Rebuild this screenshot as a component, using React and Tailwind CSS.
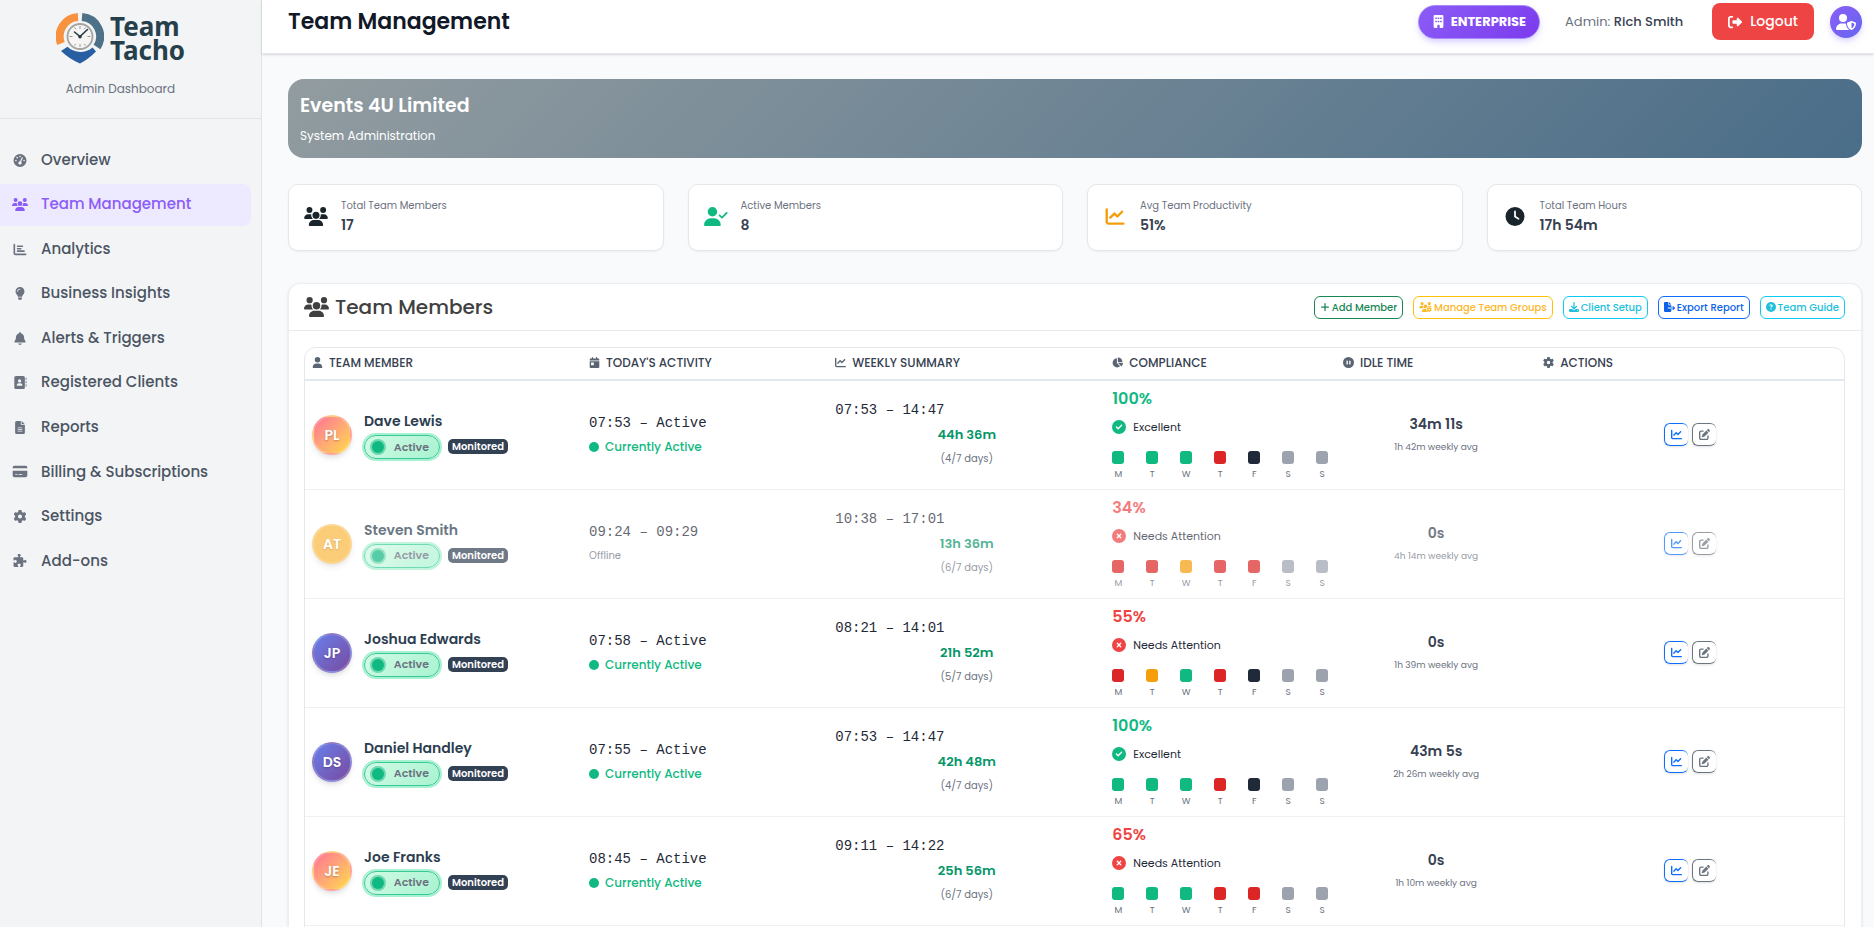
import React from "react";
import {
  FaGaugeHigh, FaUsers, FaChartBar, FaLightbulb, FaBell, FaAddressBook, FaFileLines,
  FaCreditCard, FaGear, FaPuzzlePiece, FaBuilding, FaRightFromBracket, FaUserShield,
  FaUserCheck, FaChartLine, FaClock, FaUser, FaCalendarDay, FaChartPie, FaCirclePause,
  FaPlus, FaUsersGear, FaDownload, FaFileExport, FaCircleQuestion, FaPenToSquare,
  FaCircleCheck, FaCircleXmark, FaCircle,
} from "react-icons/fa6";

const NAV = [
  ["Overview", FaGaugeHigh],
  ["Team Management", FaUsers],
  ["Analytics", FaChartBar],
  ["Business Insights", FaLightbulb],
  ["Alerts & Triggers", FaBell],
  ["Registered Clients", FaAddressBook],
  ["Reports", FaFileLines],
  ["Billing & Subscriptions", FaCreditCard],
  ["Settings", FaGear],
  ["Add-ons", FaPuzzlePiece],
];

const STATS = [
  ["Total Team Members", "17", FaUsers, "text-[#1a252b]"],
  ["Active Members", "8", FaUserCheck, "text-[#10b981]"],
  ["Avg Team Productivity", "51%", FaChartLine, "text-[#f59e0b]"],
  ["Total Team Hours", "17h 54m", FaClock, "text-[#1a252b]"],
];

const TOOLS = [
  ["Add Member", FaPlus, "w-2.5", "border-[#198754] text-[#198754]"],
  ["Manage Team Groups", FaUsersGear, "w-[13px]", "border-[#ffc107] text-[#fbb829]"],
  ["Client Setup", FaDownload, "w-2.5", "border-[#0dcaf0] text-[#20c0dd]"],
  ["Export Report", FaFileExport, "w-[11px]", "border-[#0d6efd] text-[#0d62ea]"],
  ["Team Guide", FaCircleQuestion, "w-2.5", "border-[#0dcaf0] text-[#20c0dd]"],
];

const COLUMNS = [
  ["Team Member", FaUser, "w-[18%]"],
  ["Today's Activity", FaCalendarDay, "w-[16%]"],
  ["Weekly Summary", FaChartLine, "w-[18%]"],
  ["Compliance", FaChartPie, "w-[15%]"],
  ["Idle Time", FaCirclePause, "w-[13%]"],
  ["Actions", FaGear, "w-[20%]"],
];

const DAY_COLORS = {
  g: "bg-[#10b981]",
  r: "bg-[#dc2626]",
  o: "bg-[#f59e0b]",
  k: "bg-[#1f2937]",
  x: "bg-[#9ca3af]",
};

const WARM = "bg-linear-135 from-[#ff6f91] to-[#ffd93d]";
const COOL = "bg-linear-135 from-[#667eea] to-[#764ba2]";
const AMBER = "bg-[#fbb840]";

const MEMBERS = [
  { initials: "PL", name: "Dave Lewis", avatar: WARM, start: "07:53", range: "07:53 – 14:47", total: "44h 36m", days: "(4/7 days)", score: "100%", good: true, week: "gggrkxx", idle: "34m 11s", avg: "1h 42m weekly avg" },
  { initials: "AT", name: "Steven Smith", avatar: AMBER, offline: true, start: "09:24", end: "09:29", range: "10:38 – 17:01", total: "13h 36m", days: "(6/7 days)", score: "34%", week: "rrorrxx", idle: "0s", avg: "4h 14m weekly avg" },
  { initials: "JP", name: "Joshua Edwards", avatar: COOL, start: "07:58", range: "08:21 – 14:01", total: "21h 52m", days: "(5/7 days)", score: "55%", week: "rogrkxx", idle: "0s", avg: "1h 39m weekly avg" },
  { initials: "DS", name: "Daniel Handley", avatar: COOL, start: "07:55", range: "07:53 – 14:47", total: "42h 48m", days: "(4/7 days)", score: "100%", good: true, week: "gggrkxx", idle: "43m 5s", avg: "2h 26m weekly avg" },
  { initials: "JE", name: "Joe Franks", avatar: WARM, start: "08:45", range: "09:11 – 14:22", total: "25h 56m", days: "(6/7 days)", score: "65%", week: "gggrrxx", idle: "0s", avg: "1h 10m weekly avg" },
];

function Logo() {
  return (
    <div className="flex items-center gap-1.5">
      <svg viewBox="0 0 48 52" className="h-[52px] w-12" aria-hidden="true">
        <path d="M22 5A19.500 19.500 0 0 0 5 31.500" fill="none" stroke="#f9923e" strokeWidth="8" />
        <path d="M26 5A19.500 19.500 0 0 1 41 35" fill="none" stroke="#4d7188" strokeWidth="8" />
        <path d="M5 39 11.500 34.800C18 41.500 30 41.500 36.500 35.500L40 39.500Q32 47.500 24 51.500 14 47.500 5 39Z" fill="#285fa3" />
        <circle cx="24" cy="24.500" r="12.500" fill="#f6f5f3" stroke="#a3a3a3" strokeWidth="1.800" />
        <path d="M24 14v3M24 32v3M13.500 24.500h3M31.500 24.500h3M18.700 15.500l1 1.700M29.300 15.500l-1 1.700M18.700 33.500l1-1.700M29.300 33.500l-1-1.700" stroke="#999" strokeWidth="1" />
        <path d="M18.500 20 24 24.500 31.500 17.500" fill="none" stroke="#263b45" strokeWidth="1.600" strokeLinecap="round" />
        <circle cx="24" cy="24.700" r="1.800" fill="#263b45" />
      </svg>
      <div className="font-['Noto_Sans',sans-serif] text-[26px] leading-6 font-bold text-[#25404a]">
        Team<br />Tacho
      </div>
    </div>
  );
}

function Sidebar() {
  return (
    <aside className="w-[262px] shrink-0 border-r border-[#dfe2e6] bg-[#f3f4f6]">
      <div className="flex flex-col items-center border-b border-[#e1e4e8] pt-3 pr-5 pb-[19px]">
        <Logo />
        <p className="mt-[15px] text-[12px] leading-5 text-[#6b7280]">Admin Dashboard</p>
      </div>
      <nav className="flex h-[463px] flex-col justify-between pt-5 pr-2.5">
        {NAV.map(([label, Icon]) => {
          const active = label === "Team Management";
          return (
            <a
              key={label}
              href="#"
              className={`flex h-[42px] items-center gap-[13px] rounded-r-lg pl-3 text-[15px] font-medium ${active ? "bg-[#ede9fe] text-[#8b5cf6]" : "text-[#4b5563]"}`}
            >
              <Icon className={`h-[13px] w-4 shrink-0 ${active ? "" : "text-[#6b7280]"}`} />
              {label}
            </a>
          );
        })}
      </nav>
    </aside>
  );
}

function TopBar() {
  return (
    <header className="flex h-[54px] items-start justify-between border-b border-[#e5e7eb] bg-white pr-3 pl-[26px] shadow-sm">
      <h1 className="mt-1.5 text-[22px] leading-8 font-semibold text-[#111827]">Team Management</h1>
      <div className="flex h-[43px] items-center">
        <span className="flex h-[34px] items-center gap-1.5 rounded-full border border-[#a78bfa] bg-linear-135 from-[#8b5cf6] to-[#7c3aed] px-[13px] text-[13px] font-bold text-white shadow-md shadow-violet-200">
          <FaBuilding className="size-[13px]" /> ENTERPRISE
        </span>
        <span className="ml-[25px] text-[13px] text-[#6b7280]">
          Admin: <b className="font-medium text-[#374151]">Rich Smith</b>
        </span>
        <button className="ml-[29px] flex h-[37px] items-center gap-2 rounded-lg bg-[#ef4444] px-4 text-[14px] font-medium text-white">
          <FaRightFromBracket className="size-[14px]" /> Logout
        </button>
        <button aria-label="Account" className="ml-4 flex size-8 items-center justify-center rounded-full bg-linear-135 from-[#8b5cf6] to-[#6366f1] text-white shadow-md shadow-violet-200">
          <FaUserShield className="h-4 w-5" />
        </button>
      </div>
    </header>
  );
}

function MemberRow({ m }) {
  return (
    <tr className={`h-[109px] border-b border-[#f0f1f3] ${m.offline ? "[&>td>*]:opacity-70" : ""}`}>
      <td className="pl-[7px]">
        <div className="flex items-center gap-3">
          <span className={`flex size-10 shrink-0 items-center justify-center rounded-full border-2 border-white/20 text-sm font-semibold text-white shadow-md [text-shadow:0_1px_2px_rgba(0,0,0,0.25)] ${m.avatar}`}>
            {m.initials}
          </span>
          <div>
            <div className="text-[14px] leading-5 font-semibold text-[#2c3e50]">{m.name}</div>
            <div className="mt-1 flex items-center gap-2">
              <span className="flex h-6 w-[76px] items-center justify-between rounded-full border border-[#34c996] bg-linear-135 from-[#d1fae5] to-[#a7f3d0] pr-2.5 pl-[7px] text-[11px] font-semibold text-[#6b7280] ring-2 ring-[#a7f0d0]">
                <span className="size-3 rounded-full bg-[#10b981] ring-2 ring-[#6fd8b0]" />
                Active
              </span>
              <span className="rounded-[5px] bg-[#334155] px-1 text-[10px] leading-[15px] font-semibold text-white">Monitored</span>
            </div>
          </div>
        </div>
      </td>
      <td className="pl-[7px]">
        <div>
          <div className="font-['Liberation_Mono',monospace] text-[14px] leading-5 text-[#1f2937]">
            {m.start} – {m.end || "Active"}
          </div>
          {m.offline ? (
            <div className="mt-1 text-[10px] leading-5 text-[#6b7280]">Offline</div>
          ) : (
            <div className="mt-1 flex items-center gap-1.5 text-[12px] leading-5 font-medium text-[#10b981]">
              <FaCircle className="text-[10px]" /> Currently Active
            </div>
          )}
        </div>
      </td>
      <td className="pl-[7px]">
        <div className="pr-[7px]">
          <div className="font-['Liberation_Mono',monospace] text-[14px] leading-5 text-[#1f2937]">{m.range}</div>
          <div className="mt-[5px] text-center text-[13px] leading-5 font-semibold text-[#059669]">{m.total}</div>
          <div className="mt-1 text-center text-[10px] leading-5 text-[#6b7280]">{m.days}</div>
        </div>
      </td>
      <td className="pl-[7px]">
        <div>
          <div className={`text-[16px] leading-5 font-semibold ${m.good ? "text-[#10b981]" : "text-[#ef4444]"}`}>{m.score}</div>
          <div className="mt-2 flex items-center gap-[7px] text-[11px] leading-5 text-[#1f2937]">
            {m.good ? <FaCircleCheck className="text-sm text-[#10b981]" /> : <FaCircleXmark className="text-sm text-[#ef4444]" />}
            {m.good ? "Excellent" : "Needs Attention"}
          </div>
          <div className="mt-[14px] flex gap-[22px]">
            {"MTWTFSS".split("").map((d, i) => (
              <div key={i} className="flex w-3 flex-col items-center">
                <span className={`h-[13px] w-3 rounded-[3px] ${DAY_COLORS[m.week[i]]}`} />
                <span className="mt-1 text-[9px] leading-3 text-[#6b7280]">{d}</span>
              </div>
            ))}
          </div>
        </div>
      </td>
      <td className="text-center">
        <div className="pb-px">
          <div className="text-[14px] leading-5 font-semibold text-[#374151]">{m.idle}</div>
          <div className="mt-[5px] text-[9px] leading-4 text-[#6b7280]">{m.avg}</div>
        </div>
      </td>
      <td>
        <div className="flex justify-center gap-1">
          <button aria-label={`Statistics for ${m.name}`} className="flex h-[23px] w-6 items-center justify-center rounded-md border border-r-0 border-[#0d6efd] text-[#0d6efd] shadow-sm">
            <FaChartLine className="size-[11px]" />
          </button>
          <button aria-label={`Edit ${m.name}`} className="flex h-[23px] w-6 items-center justify-center rounded-md border border-r-0 border-[#6c757d] text-[#6c757d] shadow-sm">
            <FaPenToSquare className="size-[11px]" />
          </button>
        </div>
      </td>
    </tr>
  );
}

export default function App() {
  return (
    <div className="flex h-screen overflow-hidden bg-[#f8fafc] font-['Poppins','Inter',sans-serif]">
      <Sidebar />
      <div className="flex min-w-0 flex-1 flex-col">
        <TopBar />
        <main className="flex-1 overflow-hidden pt-[25px] pr-3 pl-[26px]">
          <section className="rounded-2xl bg-linear-135 from-[#929ca0] to-[#4a6d88] px-3 pt-[13px] pb-3 text-white">
            <h2 className="text-[19px] leading-7 font-semibold">Events 4U Limited</h2>
            <p className="mt-1.5 text-[12px] leading-5">System Administration</p>
          </section>

          <section className="mt-[26px] grid grid-cols-4 gap-6">
            {STATS.map(([label, value, Icon, color]) => (
              <div key={label} className="flex h-[67px] items-center gap-[13px] rounded-[10px] border border-[#e5e7eb] bg-white pb-0.5 pl-[15px] shadow-xs">
                <Icon className={`h-[19px] w-6 shrink-0 ${color}`} />
                <div>
                  <div className="text-[10px] leading-4 text-[#6b7280]">{label}</div>
                  <div className="mt-px text-[14px] leading-5 font-semibold text-[#374151]">{value}</div>
                </div>
              </div>
            ))}
          </section>

          <section className="mt-8 rounded-xl border border-[#eceef1] bg-white shadow-sm">
            <div className="flex h-[47px] items-center justify-between border-b border-[#e9ebee] pr-4 pl-[15px]">
              <h2 className="flex items-center gap-1.5 text-[20px] font-medium text-[#404040]">
                <FaUsers className="h-5 w-[25px]" /> Team Members
              </h2>
              <div className="flex gap-2.5">
                {TOOLS.map(([label, Icon, size, style]) => (
                  <button key={label} className={`flex h-[23px] items-center gap-0.5 rounded-md border px-[5px] text-[10px] font-medium ${style}`}>
                    <Icon className={`h-2.5 ${size}`} /> {label}
                  </button>
                ))}
              </div>
            </div>
            <div className="py-4 pr-4 pl-[15px]">
              <div className="overflow-hidden rounded-xl border border-[#e5e7eb]">
                <table className="w-full table-fixed border-collapse">
                  <thead>
                    <tr className="h-8 border-b-2 border-[#e2e8f0]">
                      {COLUMNS.map(([label, Icon, width]) => (
                        <th key={label} className={`pb-0.5 pl-[7px] text-left text-[12px] leading-4 font-medium text-[#374151] uppercase ${width}`}>
                          <span className="flex items-center gap-1.5">
                            <Icon className="size-[11px] text-[#5b6472]" /> {label}
                          </span>
                        </th>
                      ))}
                    </tr>
                  </thead>
                  <tbody>
                    {MEMBERS.map((m) => <MemberRow key={m.name} m={m} />)}
                    <tr className="h-[109px]" aria-hidden="true"><td colSpan={6} /></tr>
                  </tbody>
                </table>
              </div>
            </div>
          </section>
        </main>
      </div>
    </div>
  );
}
